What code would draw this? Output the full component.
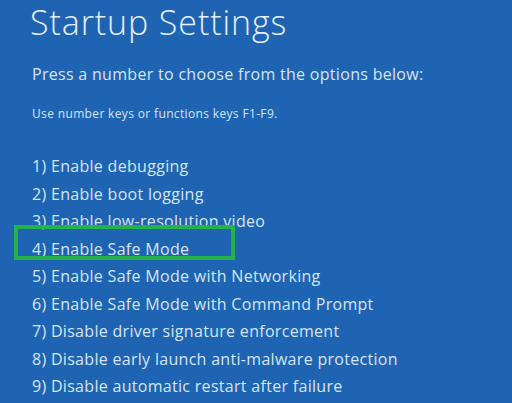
const options = [
  'Enable debugging',
  'Enable boot logging',
  'Enable low-resolution video',
  'Enable Safe Mode',
  'Enable Safe Mode with Networking',
  'Enable Safe Mode with Command Prompt',
  'Disable driver signature enforcement',
  'Disable early launch anti-malware protection',
  'Disable automatic restart after failure',
];

export default function App() {
  return (
    <div className="w-[512px] h-[403px] overflow-hidden bg-[#1f64b3] text-[#d6e4f4] pl-[32px] font-['Open_Sans',sans-serif]">
      <h1 className="pt-[2px] -ml-[2px] text-[34px] leading-[40px] tracking-[0.9px] font-light text-[#e6eef8]">Startup Settings</h1>
      <p className="mt-[20px] text-[16px] leading-[24px] tracking-[0.3px]">Press a number to choose from the options below:</p>
      <p className="mt-[20px] text-[12px] leading-[16px] tracking-[0.35px]">Use number keys or functions keys F1-F9.</p>

      <ul className="mt-[31px]">
        {options.map((label, i) => (
          <li key={label} className="relative text-[16px] leading-[27.5px] tracking-[0.3px] whitespace-nowrap">
            {i + 1}) {label}
            {i === 3 && (
              <span className="absolute left-[-18px] top-[-11px] w-[221px] h-[35px] border-[4px] border-[#25b24a]" />
            )}
          </li>
        ))}
      </ul>
    </div>
  );
}
